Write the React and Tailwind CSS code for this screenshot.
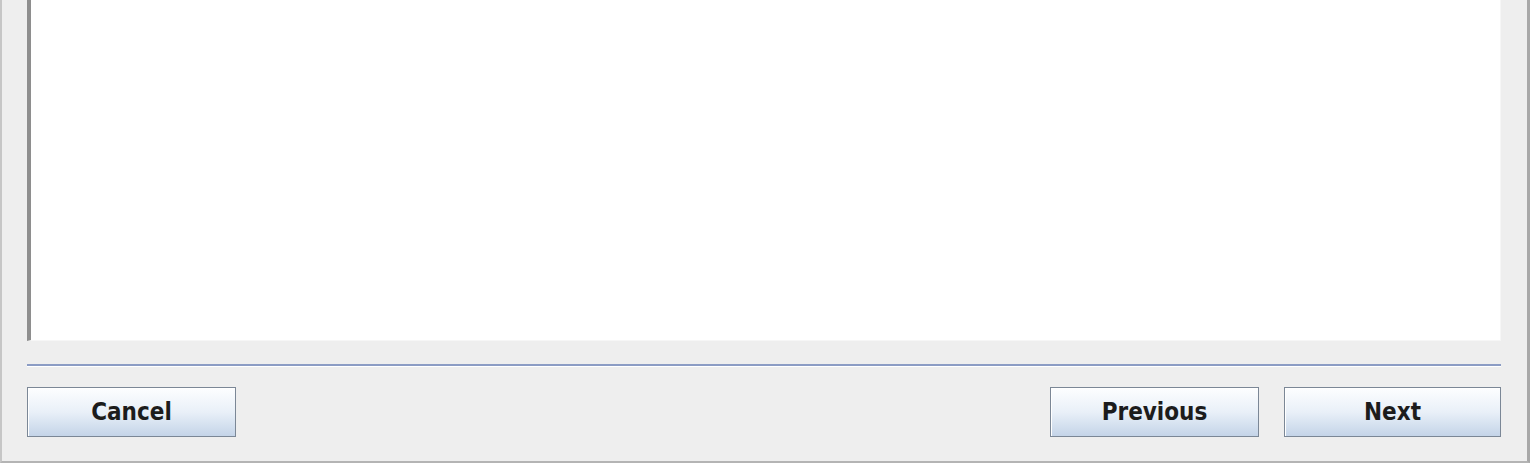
export default function App() {
  const btn =
    "h-[50px] border border-[#7b8796] shadow-[inset_1px_1px_0_#ffffff] bg-gradient-to-b from-[#fdfeff] via-[#e9f0f8] to-[#c4d4e8] text-[#1c1c1c] font-bold text-[24px] font-stretch-condensed flex items-center justify-center leading-none";
  const font = { fontFamily: '"DejaVu Sans Condensed", "DejaVu Sans", sans-serif' };
  return (
    <div className="w-[1530px] h-[465px] bg-white">
      <div className="w-[1530px] h-[463px] bg-[#eeeeee] border-l-2 border-l-[#c6c6c6] border-r-[3px] border-r-[#a8a8a8] border-b-2 border-b-[#b4b4b4] flex flex-col pl-[25px] pr-[26px] pb-[24px]">
        <div className="h-[342px] bg-white border-l-[4px] border-l-[#8e8e8e] border-r border-r-[#f6f6f6] border-b border-b-[#f6f6f6]" />
        <div className="mt-[23px] h-[3px] border-t-2 border-t-[#8b9cc4] bg-white" />
        <div className="mt-[20px] flex items-center" style={font}>
          <button className={btn + " w-[209px]"}>Cancel</button>
          <div className="flex-1" />
          <button className={btn + " w-[209px]"}>Previous</button>
          <button className={btn + " w-[217px] ml-[25px]"}>Next</button>
        </div>
      </div>
    </div>
  );
}
